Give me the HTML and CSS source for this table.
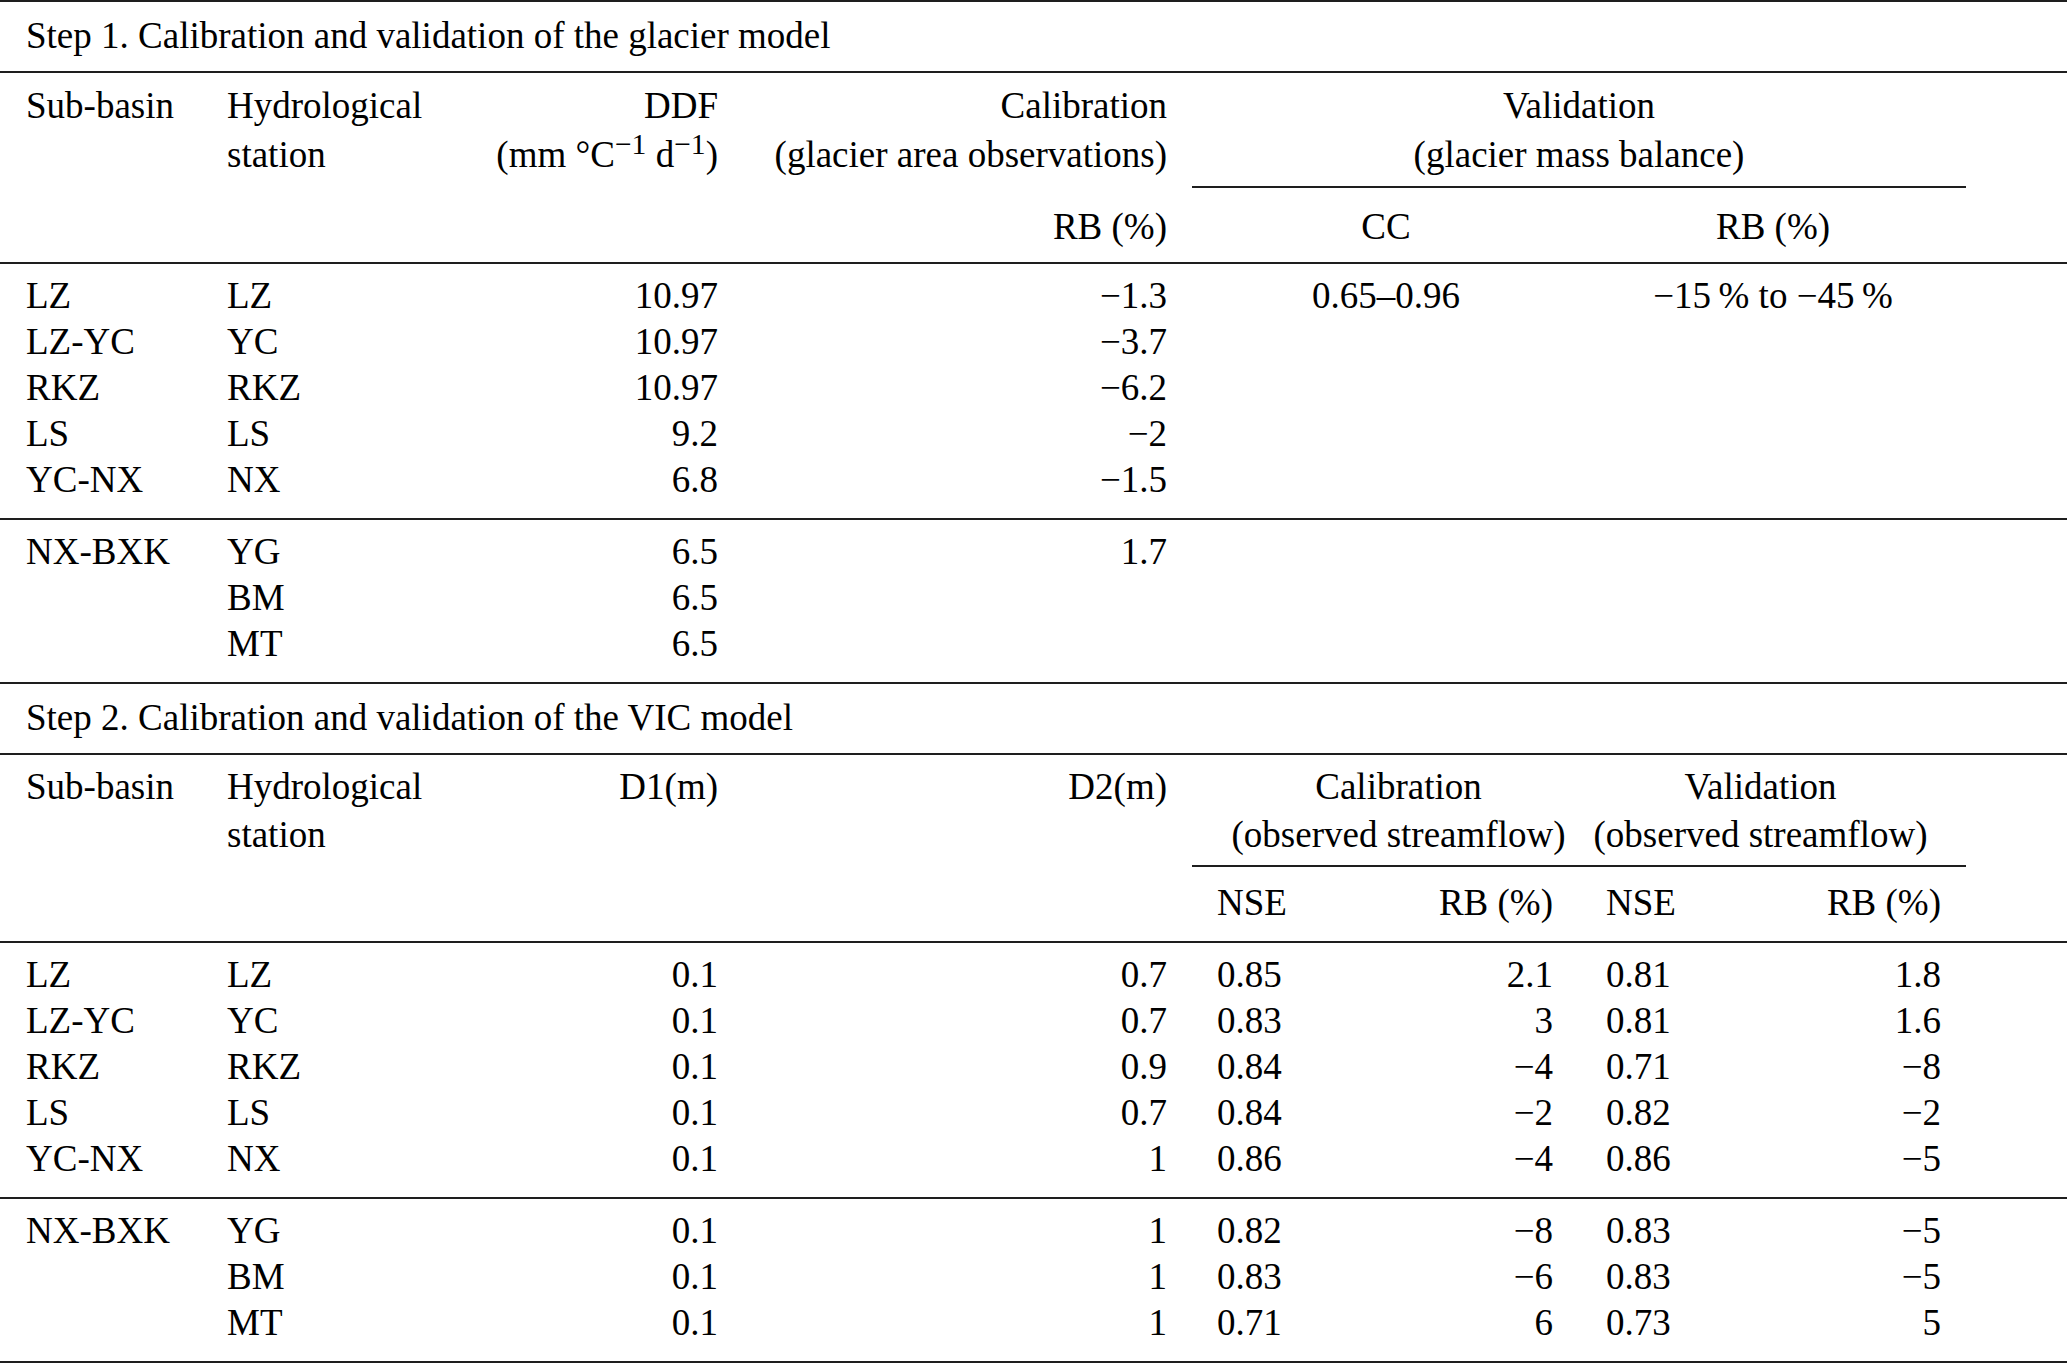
FILE: index.html
```html
<!DOCTYPE html>
<html>
<head>
<meta charset="utf-8">
<link rel="stylesheet" href="styles.css">
</head>
<body>
<div class="tbl">
  <div class="title">Step 1. Calibration and validation of the glacier model</div>

  <div class="grid head head1">
    <div class="cell c1 r1">Sub-basin</div>
    <div class="cell c2 r1">Hydrological<br>station</div>
    <div class="cell c3 r1 right">DDF<br>(mm °C<sup>−1</sup> d<sup>−1</sup>)</div>
    <div class="cell c4 r1 right">Calibration<br>(glacier area observations)</div>
    <div class="cell c5to8 r1 center group">Validation<br>(glacier mass balance)</div>
    <div class="cell c4 r2 right">RB (%)</div>
    <div class="cell c56 r2 center">CC</div>
    <div class="cell c78 r2 center">RB (%)</div>
  </div>

  <div class="grid data">
    <div class="cell c1">LZ</div><div class="cell c2">LZ</div><div class="cell c3 right">10.97</div><div class="cell c4 right">−1.3</div><div class="cell c56 center">0.65–0.96</div><div class="cell c78 center">−15&#8201;% to −45&#8201;%</div>
    <div class="cell c1">LZ-YC</div><div class="cell c2">YC</div><div class="cell c3 right">10.97</div><div class="cell c4 right">−3.7</div>
    <div class="cell c1">RKZ</div><div class="cell c2">RKZ</div><div class="cell c3 right">10.97</div><div class="cell c4 right">−6.2</div>
    <div class="cell c1">LS</div><div class="cell c2">LS</div><div class="cell c3 right">9.2</div><div class="cell c4 right">−2</div>
    <div class="cell c1">YC-NX</div><div class="cell c2">NX</div><div class="cell c3 right">6.8</div><div class="cell c4 right">−1.5</div>
  </div>

  <div class="grid data">
    <div class="cell c1">NX-BXK</div><div class="cell c2">YG</div><div class="cell c3 right">6.5</div><div class="cell c4 right">1.7</div>
    <div class="cell c2">BM</div><div class="cell c3 right">6.5</div>
    <div class="cell c2">MT</div><div class="cell c3 right">6.5</div>
  </div>

  <div class="title">Step 2. Calibration and validation of the VIC model</div>

  <div class="grid head head2">
    <div class="cell c1 r1">Sub-basin</div>
    <div class="cell c2 r1">Hydrological<br>station</div>
    <div class="cell c3 r1 right">D1(m)</div>
    <div class="cell c4 r1 right">D2(m)</div>
    <div class="cell c56 r1 center group">Calibration<br>(observed streamflow)</div>
    <div class="cell c78 r1 center group">Validation<br>(observed streamflow)</div>
    <div class="cell c5 r2">NSE</div>
    <div class="cell c6 r2 right">RB (%)</div>
    <div class="cell c7 r2">NSE</div>
    <div class="cell c8 r2 right">RB (%)</div>
  </div>

  <div class="grid data">
    <div class="cell c1">LZ</div><div class="cell c2">LZ</div><div class="cell c3 right">0.1</div><div class="cell c4 right">0.7</div><div class="cell c5">0.85</div><div class="cell c6 right">2.1</div><div class="cell c7">0.81</div><div class="cell c8 right">1.8</div>
    <div class="cell c1">LZ-YC</div><div class="cell c2">YC</div><div class="cell c3 right">0.1</div><div class="cell c4 right">0.7</div><div class="cell c5">0.83</div><div class="cell c6 right">3</div><div class="cell c7">0.81</div><div class="cell c8 right">1.6</div>
    <div class="cell c1">RKZ</div><div class="cell c2">RKZ</div><div class="cell c3 right">0.1</div><div class="cell c4 right">0.9</div><div class="cell c5">0.84</div><div class="cell c6 right">−4</div><div class="cell c7">0.71</div><div class="cell c8 right">−8</div>
    <div class="cell c1">LS</div><div class="cell c2">LS</div><div class="cell c3 right">0.1</div><div class="cell c4 right">0.7</div><div class="cell c5">0.84</div><div class="cell c6 right">−2</div><div class="cell c7">0.82</div><div class="cell c8 right">−2</div>
    <div class="cell c1">YC-NX</div><div class="cell c2">NX</div><div class="cell c3 right">0.1</div><div class="cell c4 right">1</div><div class="cell c5">0.86</div><div class="cell c6 right">−4</div><div class="cell c7">0.86</div><div class="cell c8 right">−5</div>
  </div>

  <div class="grid data">
    <div class="cell c1">NX-BXK</div><div class="cell c2">YG</div><div class="cell c3 right">0.1</div><div class="cell c4 right">1</div><div class="cell c5">0.82</div><div class="cell c6 right">−8</div><div class="cell c7">0.83</div><div class="cell c8 right">−5</div>
    <div class="cell c2">BM</div><div class="cell c3 right">0.1</div><div class="cell c4 right">1</div><div class="cell c5">0.83</div><div class="cell c6 right">−6</div><div class="cell c7">0.83</div><div class="cell c8 right">−5</div>
    <div class="cell c2">MT</div><div class="cell c3 right">0.1</div><div class="cell c4 right">1</div><div class="cell c5">0.71</div><div class="cell c6 right">6</div><div class="cell c7">0.73</div><div class="cell c8 right">5</div>
  </div>
</div>
</body>
</html>
```

FILE: styles.css
```css
html, body {
  margin: 0;
  padding: 0;
  background: #ffffff;
}

body {
  color: #000000;
  font-family: "Liberation Serif", "Times New Roman", serif;
  font-size: 37px;
  width: 2067px;
  height: 1363px;
  overflow: hidden;
}

.tbl {
  width: 2067px;
  border-top: 2px solid #1e1e1e;
}

.title {
  height: 71px;
  box-sizing: border-box;
  display: flex;
  align-items: center;
  padding-left: 26px;
  padding-bottom: 3px;
  border-bottom: 2px solid #1e1e1e;
  white-space: nowrap;
}

.grid {
  display: grid;
  grid-template-columns: 201px 200px 342px 449px 194px 194px 193px 193px 1fr;
  border-bottom: 2px solid #1e1e1e;
}

.cell {
  padding: 0 25px;
  white-space: nowrap;
}

.c1 { grid-column: 1; padding-left: 26px; }
.c2 { grid-column: 2; padding-left: 26px; }
.c3 { grid-column: 3; }
.c4 { grid-column: 4; }
.c5 { grid-column: 5; }
.c6 { grid-column: 6; padding-right: 27px; }
.c7 { grid-column: 7; padding-left: 26px; }
.c8 { grid-column: 8; }
.c56 { grid-column: 5 / span 2; }
.c78 { grid-column: 7 / span 2; }
.c5to8 { grid-column: 5 / span 4; }

.right { text-align: right; }
.center { text-align: center; }

.head .r1 { grid-row: 1; align-self: start; }
.head .r2 { grid-row: 2; }

/* Step 1 header */
.head1 { padding: 8px 0 11px; }
.head1 .r1 { line-height: 49px; }
.head1 .group { padding-bottom: 7px; border-bottom: 2px solid #1e1e1e; }
.head1 .r2 { line-height: 48px; margin-top: 15px; }

/* Step 2 header */
.head2 { padding: 8px 0 14px; }
.head2 .r1 { line-height: 48px; }
.head2 .group { padding-bottom: 6px; border-bottom: 2px solid #1e1e1e; }
.head2 .r2 { line-height: 48px; margin-top: 12px; }

.group.c56 { padding-right: 0; }
.group.c78 { padding-left: 0; }

sup {
  font-size: 0.8em;
  line-height: 0;
  vertical-align: 0.45em;
}

.data {
  padding: 9px 0 15px;
  grid-auto-rows: 46px;
  line-height: 46px;
}
```
